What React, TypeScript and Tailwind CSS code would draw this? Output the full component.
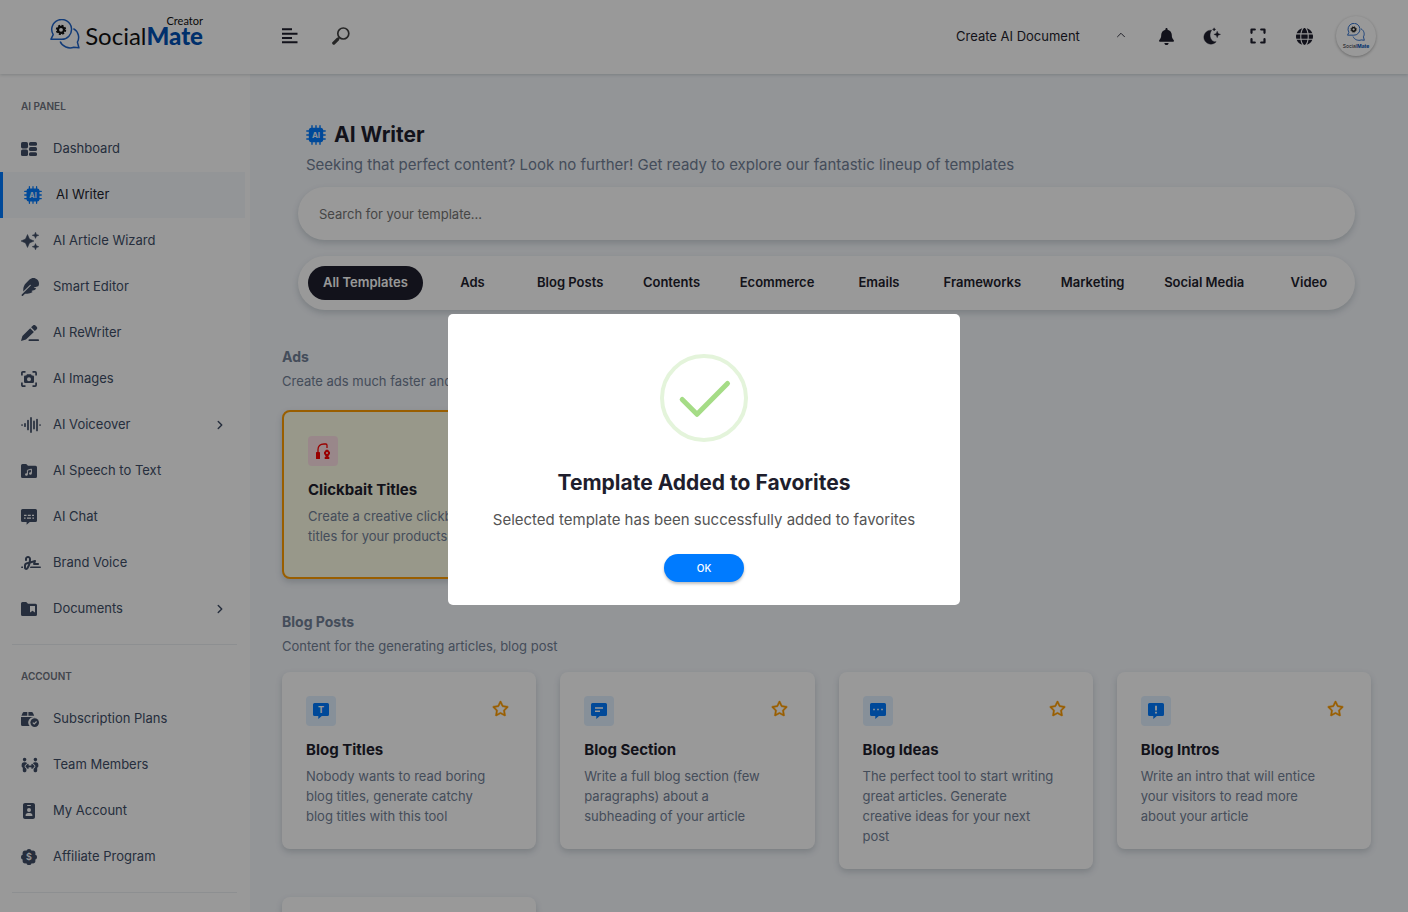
import { useState } from "react";
import type { ReactNode } from "react";
import { FaBell, FaFeather, FaGlobe, FaIdBadge, FaPeopleArrows, FaRegStar, FaSignature, FaStar } from "react-icons/fa6";
import { ChevronRight, ChevronUp } from "lucide-react";

type IconProps = { className?: string };

/* ---------- Icons ---------- */

function DashboardIcon() {
  return (
    <svg viewBox="0 0 16 14" className="w-4" fill="currentColor">
      <rect x="0" y="0" width="7" height="6.4" rx="1.6" />
      <rect x="0" y="7.6" width="7" height="6.4" rx="1.6" />
      <rect x="8" y="0" width="8" height="3.8" rx="1.5" />
      <rect x="8" y="5.1" width="8" height="3.8" rx="1.5" />
      <rect x="8" y="10.2" width="8" height="3.8" rx="1.5" />
    </svg>
  );
}

function ChipIcon({ className }: IconProps) {
  return (
    <svg viewBox="0 0 20 20" className={className}>
      <path
        d="M6 .8v18.4M10 .8v18.4M14 .8v18.4M.8 6h18.4M.8 10h18.4M.8 14h18.4"
        stroke="#007bff"
        strokeWidth="1.4"
        strokeLinecap="round"
      />
      <rect x="2.8" y="2.8" width="14.4" height="14.4" rx="2.6" fill="#007bff" />
      <text x="10" y="12.8" textAnchor="middle" fontSize="8" fontWeight="700" fill="#e8f2ff" fontFamily="Inter, sans-serif">
        AI
      </text>
    </svg>
  );
}

function SparklesIcon() {
  return (
    <svg viewBox="0 0 18 18" className="w-[18px]" fill="currentColor" stroke="currentColor" strokeWidth=".5" strokeLinejoin="round">
      <path d="M6.5 2.5 8.5 7 13 9 8.5 11 6.5 15.500 4.500 11 0 9 4.500 7z" />
      <path d="M14.500.2l.9 2.200 2.400.9-2.400.9-.9 2.200-.9-2.200-2.400-.9 2.400-.9zM14.500 11.600l.9 2.200 2.400.9-2.400.9-.9 2.200-.9-2.200-2.400-.9 2.400-.9z" />
    </svg>
  );
}

function PenLineIcon() {
  return (
    <svg viewBox="0 0 18 16" className="w-[18px]" fill="currentColor">
      <path d="M9.200 3.200 12.900 6.900 5 14.600 0 16l1.400-5zM10.100 2.300 11.700.7a2.100 2.100 0 0 1 3 0l.8.8a2.100 2.100 0 0 1 0 3L13.800 6z" />
      <rect x="7.500" y="14.300" width="10.500" height="1.700" rx=".85" />
    </svg>
  );
}

function CameraFrameIcon() {
  return (
    <svg viewBox="0 0 16 16" className="w-4">
      <path d="M.9 4.500V1.900a1 1 0 0 1 1-1h2.600M11.500.9h2.600a1 1 0 0 1 1 1v2.600M15.100 11.500v2.600a1 1 0 0 1-1 1h-2.600M4.500 15.100H1.900a1 1 0 0 1-1-1v-2.600" fill="none" stroke="currentColor" strokeWidth="1.700" />
      <path
        fill="currentColor"
        fillRule="evenodd"
        d="M6 3.300h4l.8 1.300h1a1.200 1.200 0 0 1 1.200 1.200v5a1.200 1.200 0 0 1-1.200 1.200H4.200A1.200 1.200 0 0 1 3 10.800v-5a1.200 1.200 0 0 1 1.200-1.200h1zM8 6.200a2 2 0 1 0 0 4 2 2 0 0 0 0-4z"
      />
    </svg>
  );
}

function WaveIcon() {
  return (
    <svg viewBox="0 0 20 16" className="w-5" stroke="currentColor" strokeWidth="1.700" strokeLinecap="round">
      <path d="M1 8h.1M4 6.800v2.400M7 3.600v8.800M10 .9v14.200M13 4.400v7.200M16 2.600v10.800M19 8h.1" />
    </svg>
  );
}

function FolderMusicIcon() {
  return (
    <svg viewBox="0 0 16 14" className="w-4">
      <path d="M0 1.500A1.500 1.500 0 0 1 1.500 0h3.700l1.800 1.800h7.500A1.500 1.500 0 0 1 16 3.300v9.200a1.500 1.500 0 0 1-1.500 1.500h-13A1.500 1.500 0 0 1 0 12.500z" fill="currentColor" />
      <path d="M6.400 10.400V6.300l4-1.200v4.300" fill="none" stroke="#fff" strokeWidth="1" />
      <circle cx="5.400" cy="10.500" r="1.300" fill="#fff" />
      <circle cx="9.400" cy="9.500" r="1.300" fill="#fff" />
    </svg>
  );
}

function CaptionsIcon() {
  return (
    <svg viewBox="0 0 16 16" className="w-4">
      <path d="M1.500 0h13A1.500 1.500 0 0 1 16 1.500v10a1.500 1.500 0 0 1-1.500 1.500H8.800L5.600 15.800V13H1.500A1.500 1.500 0 0 1 0 11.500v-10A1.500 1.500 0 0 1 1.500 0z" fill="currentColor" />
      <path d="M3 6.400h2.500M6.800 6.400h3M11 6.400h2M3 9.200h1.600M6 9.200h4M11.400 9.200H13" stroke="#fff" strokeWidth="1.200" />
    </svg>
  );
}

function FolderBookmarkIcon() {
  return (
    <svg viewBox="0 0 16 14" className="w-4">
      <path d="M0 1.500A1.500 1.500 0 0 1 1.500 0h3.700l1.800 1.800h7.500A1.500 1.500 0 0 1 16 3.300v9.200a1.500 1.500 0 0 1-1.500 1.500h-13A1.500 1.500 0 0 1 0 12.500z" fill="currentColor" />
      <path d="M9 4h5v6.500L11.500 8.700 9 10.500z" fill="#fff" />
    </svg>
  );
}

function BoxCheckIcon() {
  return (
    <svg viewBox="0 0 18 15" className="w-[18px]">
      <path d="M6.300 0v3.800H.4L1.600.9A1.500 1.500 0 0 1 3 0zM7.400 0h3.200A1.500 1.500 0 0 1 12 .9l1.200 2.900H7.400zM0 5h13.600v.2a5.300 5.300 0 0 0-5 8.700H1.500A1.500 1.500 0 0 1 0 12.400z" fill="currentColor" />
      <circle cx="13.700" cy="10.600" r="4.300" fill="currentColor" />
      <path d="M11.800 10.700l1.400 1.300 2.400-2.500" fill="none" stroke="#fff" strokeWidth="1.100" />
    </svg>
  );
}

function DollarBadgeIcon() {
  return (
    <svg viewBox="0 0 16 16" className="w-4">
      <g fill="currentColor">
        <circle cx="8" cy="8" r="6.700" />
        <circle cx="8" cy="2.600" r="2.600" />
        <circle cx="8" cy="13.400" r="2.600" />
        <circle cx="2.600" cy="8" r="2.600" />
        <circle cx="13.400" cy="8" r="2.600" />
        <circle cx="4.200" cy="4.200" r="2.600" />
        <circle cx="11.800" cy="4.200" r="2.600" />
        <circle cx="4.200" cy="11.800" r="2.600" />
        <circle cx="11.800" cy="11.800" r="2.600" />
      </g>
      <text x="8" y="11.300" textAnchor="middle" fontSize="9" fontWeight="600" fill="#fff" fontFamily="Inter, sans-serif">
        $
      </text>
    </svg>
  );
}

function MenuIcon() {
  return (
    <svg viewBox="0 0 16 16" className="w-4" fill="currentColor">
      <path d="M0 .2h10v2H0zM0 4.700h15.500v2H0zM0 9h10v2H0zM0 13.300h15.500v2H0z" />
    </svg>
  );
}

function SearchIcon() {
  return (
    <svg viewBox="0 0 18 18" className="w-[18px]" fill="none" stroke="currentColor">
      <circle cx="11.300" cy="6.500" r="5.500" strokeWidth="1.700" />
      <path d="M7.300 10.600 5.800 12.100" strokeWidth="1.700" />
      <path d="M5.600 12.300 1.800 16.100" strokeWidth="3.300" strokeLinecap="round" />
    </svg>
  );
}

function MoonIcon() {
  return (
    <svg viewBox="0 0 18 18" className="w-[18px]" fill="currentColor" stroke="currentColor" strokeWidth=".4" strokeLinejoin="round">
      <path d="M8.600 3.200A7 7 0 1 0 13.200 14.700C8 15.500 5 8.500 8.600 3.200z" />
      <path d="M14.200 4.200l.9 2.300 2.400.9-2.400.9-.9 2.400-.9-2.400-2.400-.9 2.400-.9zM11.100.8l.5 1.100 1.100.5-1.100.5-.5 1.100-.5-1.100-1.100-.5 1.100-.5z" />
    </svg>
  );
}

function ExpandIcon() {
  return (
    <svg viewBox="0 0 16 16" className="w-4" fill="none" stroke="currentColor" strokeWidth="2.200" strokeLinecap="round" strokeLinejoin="round">
      <path d="M1.500 4.800V1.500h3.300M11.200 1.500h3.300v3.300M14.500 11.200v3.300h-3.300M4.800 14.500H1.500v-3.300" />
    </svg>
  );
}

function BubblesIcon({ className }: IconProps) {
  return (
    <svg viewBox="0 0 30 30" className={className} fill="none">
      <path d="M3.200 15.600A9.900 9.900 0 1 1 11 20.300H.9z" stroke="#1e63c8" strokeWidth="1.500" strokeLinejoin="round" />
      <path d="M23.400 9.700c5.400 3 6.400 9.300 4 13.400l1.500 5.700-5.100-.6c-5 1.900-11.700-.4-13.600-5.600" stroke="#1e63c8" strokeWidth="1.500" strokeLinejoin="round" />
      <circle cx="11" cy="10.800" r="4.400" fill="none" stroke="#111" strokeWidth="1.600" strokeDasharray="2 1.455" />
      <circle cx="11" cy="10.800" r="3" stroke="#111" strokeWidth="2.200" />
    </svg>
  );
}

function MessageIcon({ children }: { children: ReactNode }) {
  return (
    <svg viewBox="0 0 16 16" className="w-4">
      <path d="M1.500 0h13A1.500 1.500 0 0 1 16 1.500v10a1.500 1.500 0 0 1-1.500 1.500H8.800L5.300 16V13H1.500A1.500 1.500 0 0 1 0 11.500v-10A1.500 1.500 0 0 1 1.500 0z" fill="#007bff" />
      {children}
    </svg>
  );
}

function ClickbaitIcon() {
  return (
    <svg viewBox="0 0 16 16" className="w-4">
      <rect x="1" y="9" width="4" height="7" rx=".6" fill="#ff0000" />
      <path d="M3 9V6.500C3 3 5 1 9 1h1.800A1.200 1.200 0 0 1 12 2.200V5" fill="none" stroke="#ff0000" strokeWidth="1.300" />
      <path d="M11 6.800h2l2 2.400v1.500l-1.500 2.300v1h.8v2H9.700v-2h.8v-1L9 10.700V9.200z" fill="#ff0000" />
      <circle cx="12" cy="10" r="1" fill="#ffe2e6" />
    </svg>
  );
}

/* ---------- Data ---------- */

const panelItems = [
  { label: "Dashboard", icon: <DashboardIcon /> },
  { label: "AI Writer", icon: <ChipIcon className="w-[18px]" />, active: true },
  { label: "AI Article Wizard", icon: <SparklesIcon /> },
  { label: "Smart Editor", icon: <FaFeather size={18} /> },
  { label: "AI ReWriter", icon: <PenLineIcon /> },
  { label: "AI Images", icon: <CameraFrameIcon /> },
  { label: "AI Voiceover", icon: <WaveIcon />, children: true },
  { label: "AI Speech to Text", icon: <FolderMusicIcon /> },
  { label: "AI Chat", icon: <CaptionsIcon /> },
  { label: "Brand Voice", icon: <FaSignature size={20} /> },
  { label: "Documents", icon: <FolderBookmarkIcon />, children: true },
];

const accountItems = [
  { label: "Subscription Plans", icon: <BoxCheckIcon /> },
  { label: "Team Members", icon: <FaPeopleArrows size={18} /> },
  { label: "My Account", icon: <FaIdBadge size={16} /> },
  { label: "Affiliate Program", icon: <DollarBadgeIcon /> },
];

const tabs = ["All Templates", "Ads", "Blog Posts", "Contents", "Ecommerce", "Emails", "Frameworks", "Marketing", "Social Media", "Video"];

const blogTemplates = [
  {
    title: "Blog Titles",
    text: "Nobody wants to read boring blog titles, generate catchy blog titles with this tool",
    icon: (
      <MessageIcon>
        <text x="8" y="10" textAnchor="middle" fontSize="9" fontWeight="700" fill="#fff" fontFamily="Inter, sans-serif">T</text>
      </MessageIcon>
    ),
  },
  {
    title: "Blog Section",
    text: "Write a full blog section (few paragraphs) about a subheading of your article",
    icon: (
      <MessageIcon>
        <path d="M4 5h8M4 8.300h5" stroke="#fff" strokeWidth="1.400" />
      </MessageIcon>
    ),
  },
  {
    title: "Blog Ideas",
    text: "The perfect tool to start writing great articles. Generate creative ideas for your next post",
    icon: (
      <MessageIcon>
        <path d="M3.200 6.500h1.600M7.200 6.500h1.600M11.200 6.500h1.600" stroke="#fff" strokeWidth="1.500" />
      </MessageIcon>
    ),
  },
  {
    title: "Blog Intros",
    text: "Write an intro that will entice your visitors to read more about your article",
    icon: (
      <MessageIcon>
        <path d="M8 2.800v4.600M8 8.800v1.800" stroke="#fff" strokeWidth="1.800" />
      </MessageIcon>
    ),
  },
  {
    title: "Blog Conclusion",
    text: "End your blog articles with an engaging conclusion paragraph",
    icon: (
      <MessageIcon>
        <path d="M4 5h8M4 8.300h8" stroke="#fff" strokeWidth="1.400" />
      </MessageIcon>
    ),
  },
];

/* ---------- Parts ---------- */

function NavList({ title, items }: { title: string; items: { label: string; icon: ReactNode; active?: boolean; children?: boolean }[] }) {
  return (
    <div>
      <h2 className="mb-3 pl-[21px] text-[10px] leading-4 font-semibold text-[#6f7480] uppercase">{title}</h2>
      <ul className="pr-[5px]">
        {items.map((item) => (
          <li key={item.label}>
            <a
              href="#"
              className={`flex h-[46px] items-center pl-[21px] text-[13px] ${
                item.active ? "border-l-[3px] border-[#007bff] bg-[#f5f8fc] text-[#1e1e2d]" : "text-[#404e67]"
              }`}
            >
              <span className="flex w-8 shrink-0 items-center">{item.icon}</span>
              {item.label}
              {item.children && <ChevronRight size={14} strokeWidth={2.5} className="mr-[18px] ml-auto" />}
            </a>
          </li>
        ))}
      </ul>
    </div>
  );
}

function TemplateCard({ title, text, icon, favorite }: { title: string; text: string; icon: ReactNode; favorite?: boolean }) {
  return (
    <article
      className={`rounded-lg px-6 pt-6 pb-[23px] shadow-[0_3px_6px_rgba(60,80,90,0.22)] ${
        favorite ? "min-h-[169px] border-2 border-[#ff9d00] bg-[#fdfde6]" : "bg-white"
      }`}
    >
      <div className="flex items-start justify-between">
        <span className={`flex size-[30px] items-center justify-center rounded ${favorite ? "bg-[#ffe2e6]" : "bg-[#e1f0ff]"}`}>
          {icon}
        </span>
        <button type="button" aria-label={`Favorite ${title}`} className="mt-1 mr-[3px] text-[#ff9d00]">
          {favorite ? <FaStar size={17} /> : <FaRegStar size={17} strokeWidth={14} />}
        </button>
      </div>
      <h3 className="mt-[13px] text-[15px] leading-[22px] font-bold text-[#1e1e2d]">{title}</h3>
      <p className="mt-[5px] pr-3 text-[13px] leading-5 text-[#728096]">{text}</p>
    </article>
  );
}

function SectionTitle({ title, text }: { title: string; text: string }) {
  return (
    <div>
      <h2 className="text-sm leading-5 font-bold text-[#728096]">{title}</h2>
      <p className="mt-1 text-[13px] leading-5 text-[#728096]">{text}</p>
    </div>
  );
}

function SuccessDialog({ onClose }: { onClose: () => void }) {
  return (
    <div className="fixed inset-0 z-50 flex items-center justify-center bg-black/40 pt-[7px]">
      <div role="dialog" aria-modal="true" aria-labelledby="dialog-title" className="flex w-[512px] flex-col items-center rounded-[5px] bg-white pt-10 pb-[23px]">
        <svg viewBox="0 0 88 88" className="size-[88px]" fill="none">
          <circle cx="44" cy="44" r="42" stroke="#e4f4db" strokeWidth="4" />
          <path d="M22.200 45.500 37 60.300 67.500 29.500" stroke="#a5dc86" strokeWidth="5" strokeLinecap="round" strokeLinejoin="round" />
        </svg>
        <h2 id="dialog-title" className="mt-[27px] text-[21px] leading-7 font-bold text-[#1e1e2d]">
          Template Added to Favorites
        </h2>
        <p className="mt-[13px] text-[15px] leading-5 text-[#545454]">Selected template has been successfully added to favorites</p>
        <button
          type="button"
          onClick={onClose}
          className="mt-6 h-7 w-20 rounded-full bg-[#007bff] text-[10px] font-medium text-white shadow-[0_2px_3px_rgba(0,0,0,0.25)]"
        >
          OK
        </button>
      </div>
    </div>
  );
}

export default function App() {
  const [open, setOpen] = useState(true);
  const [tab, setTab] = useState("All Templates");

  return (
    <div className="flex h-screen flex-col overflow-hidden bg-[#f5f8fc] font-['Inter',sans-serif] text-[#1e1e2d]">
      {/* Header */}
      <header className="z-10 flex h-[74px] shrink-0 items-center bg-white pb-0.5 shadow-[0_1px_3px_rgba(60,80,90,0.22)]">
        <a href="#" className="flex w-[250px] items-center gap-[3px] pb-1 pl-[50px]">
          <BubblesIcon className="size-[30px] shrink-0" />
          <span className="flex w-[120px] flex-col items-end pb-1.5 font-['Lato',sans-serif]">
            <span className="text-[11px] leading-[10px] text-[#111]">Creator</span>
            <span className="text-2xl leading-5 text-[#111]">
              Social<b className="font-black text-[#0050b4]">Mate</b>
            </span>
          </span>
        </a>
        <button type="button" aria-label="Toggle menu" className="ml-8">
          <MenuIcon />
        </button>
        <button type="button" aria-label="Search" className="ml-[34px] text-[#404040]">
          <SearchIcon />
        </button>

        <div className="ml-auto flex items-center pr-8">
          <label className="relative mr-[15px] flex items-center">
            <span className="sr-only">Create document</span>
            <select className="h-6 w-[172px] appearance-none bg-transparent text-[13px] leading-6 text-[#1e1e2d]">
              <option>Create AI Document</option>
            </select>
            <ChevronUp size={14} strokeWidth={1.5} className="pointer-events-none absolute top-1 right-0" />
          </label>
          <button type="button" aria-label="Notifications" className="flex w-[46px] justify-center"><FaBell size={17} /></button>
          <button type="button" aria-label="Dark mode" className="flex w-[46px] justify-center"><MoonIcon /></button>
          <button type="button" aria-label="Full screen" className="flex w-[46px] justify-center"><ExpandIcon /></button>
          <button type="button" aria-label="Language" className="flex w-[46px] justify-center"><FaGlobe size={17} /></button>
          <a href="#" className="ml-[9px] flex size-10 flex-col items-center justify-center rounded-full bg-white shadow-[0_1px_3px_rgba(0,0,0,0.3)]">
            <BubblesIcon className="size-[18px]" />
            <span className="mt-0.5 text-[5px] leading-[6px]">
              Social<b className="text-[#0050b4]">Mate</b>
            </span>
          </a>
        </div>
      </header>

      <div className="flex min-h-0 flex-1">
        {/* Sidebar */}
        <nav className="w-[250px] shrink-0 bg-white pt-6">
          <NavList title="AI Panel" items={panelItems} />
          <hr className="mt-3 mr-[13px] mb-[23px] ml-3 border-[#ebeef2]" />
          <NavList title="Account" items={accountItems} />
          <hr className="mt-3 mr-[13px] ml-3 border-[#ebeef2]" />
        </nav>

        {/* Content */}
        <main className="min-w-0 flex-1 pt-[47px] pr-[37px] pl-8">
          <div className="mr-4 ml-4">
            <h1 className="flex items-center gap-2 pl-2 text-[21px] leading-7 font-bold">
              <ChipIcon className="size-5" />
              AI Writer
            </h1>
            <p className="mt-1.5 pl-2 text-[15px] leading-5 text-[#728096]">
              Seeking that perfect content? Look no further! Get ready to explore our fantastic lineup of templates
            </p>
            <input
              type="text"
              aria-label="Search for your template"
              placeholder="Search for your template..."
              className="mt-3 block h-[53px] w-full rounded-[27px] bg-white px-[21px] text-[13px] shadow-[0_3px_6px_rgba(60,80,90,0.22)] placeholder:text-[#757575]"
            />
            <div className="mt-4 flex h-[54px] items-center justify-between rounded-[27px] bg-white pr-1.5 pl-2.5 shadow-[0_3px_6px_rgba(60,80,90,0.22)]">
              {tabs.map((name) => (
                <button
                  key={name}
                  type="button"
                  onClick={() => setTab(name)}
                  className={`h-[34px] min-w-20 rounded-full px-[15px] text-[13px] font-semibold whitespace-nowrap ${
                    tab === name ? "bg-[#1e1e2d] text-white" : "text-[#1e1e2d]"
                  }`}
                >
                  {name}
                </button>
              ))}
            </div>
          </div>

          <section className="mt-[37px]">
            <SectionTitle title="Ads" text="Create ads much faster and more efficiently" />
            <div className="mt-[19px] grid grid-cols-4 items-start gap-6">
              <TemplateCard favorite title="Clickbait Titles" text="Create a creative clickbait titles for your products" icon={<ClickbaitIcon />} />
            </div>
          </section>

          <section className="mt-[33px]">
            <SectionTitle title="Blog Posts" text="Content for the generating articles, blog post" />
            <div className="mt-4 grid grid-cols-4 items-start gap-x-6 gap-y-7">
              {blogTemplates.map((t) => (
                <TemplateCard key={t.title} title={t.title} text={t.text} icon={t.icon} />
              ))}
            </div>
          </section>
        </main>
      </div>

      {open && <SuccessDialog onClose={() => setOpen(false)} />}
    </div>
  );
}
